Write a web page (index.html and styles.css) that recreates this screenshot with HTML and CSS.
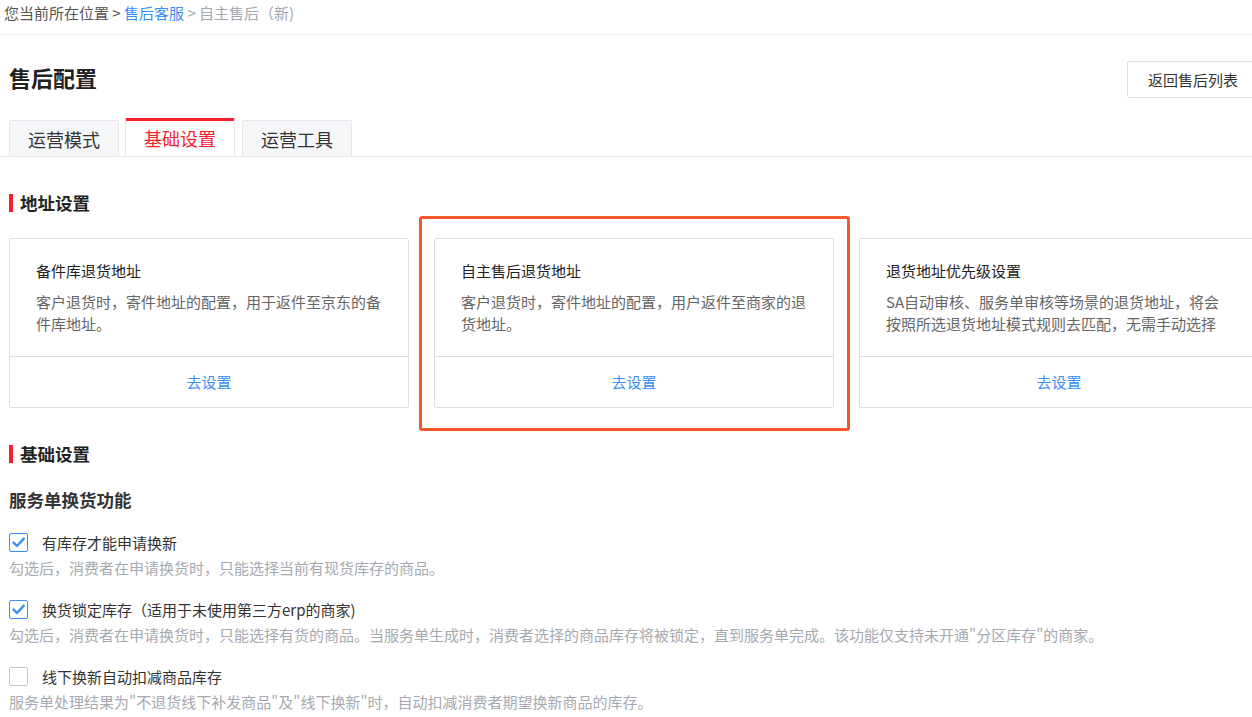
FILE: index.html
```html
<!DOCTYPE html>
<html lang="zh">
<head>
<meta charset="utf-8">
<link rel="stylesheet" href="styles.css">
</head>
<body>
<div class="breadcrumb">
  <span class="bc-base">您当前所在位置 &gt; </span><a class="bc-link">售后客服</a><span class="bc-cur"> &gt; 自主售后（新)</span>
</div>
<div class="page">
  <div class="head">
    <h1 class="title">售后配置</h1>
    <button class="back-btn">返回售后列表</button>
  </div>
  <div class="tabs">
    <div class="tab">运营模式</div>
    <div class="tab active">基础设置</div>
    <div class="tab">运营工具</div>
  </div>

  <h2 class="sec-title">地址设置</h2>
  <div class="cards">
    <div class="card">
      <div class="card-body">
        <div class="card-title">备件库退货地址</div>
        <div class="card-desc">客户退货时，寄件地址的配置，用于返件至京东的备件库地址。</div>
      </div>
      <div class="card-foot">去设置</div>
    </div>
    <div class="card highlighted">
      <div class="card-body">
        <div class="card-title">自主售后退货地址</div>
        <div class="card-desc">客户退货时，寄件地址的配置，用户返件至商家的退货地址。</div>
      </div>
      <div class="card-foot">去设置</div>
      <div class="mark"></div>
    </div>
    <div class="card">
      <div class="card-body">
        <div class="card-title">退货地址优先级设置</div>
        <div class="card-desc">SA自动审核、服务单审核等场景的退货地址，将会按照所选退货地址模式规则去匹配，无需手动选择</div>
      </div>
      <div class="card-foot">去设置</div>
    </div>
  </div>

  <h2 class="sec-title sec-basic">基础设置</h2>
  <h3 class="sub-title">服务单换货功能</h3>

  <div class="opt">
    <label class="opt-row"><span class="cb checked"><svg viewBox="0 0 19 19" width="19" height="19"><path d="M4.5 9.6 L8 13 L14.8 5.6" fill="none" stroke="#3a8ef6" stroke-width="2.4" stroke-linecap="round" stroke-linejoin="round"/></svg></span><span class="opt-label">有库存才能申请换新</span></label>
    <div class="opt-desc">勾选后，消费者在申请换货时，只能选择当前有现货库存的商品。</div>
  </div>
  <div class="opt">
    <label class="opt-row"><span class="cb checked"><svg viewBox="0 0 19 19" width="19" height="19"><path d="M4.5 9.6 L8 13 L14.8 5.6" fill="none" stroke="#3a8ef6" stroke-width="2.4" stroke-linecap="round" stroke-linejoin="round"/></svg></span><span class="opt-label">换货锁定库存（适用于未使用第三方erp的商家)</span></label>
    <div class="opt-desc">勾选后，消费者在申请换货时，只能选择有货的商品。当服务单生成时，消费者选择的商品库存将被锁定，直到服务单完成。该功能仅支持未开通"分区库存"的商家。</div>
  </div>
  <div class="opt">
    <label class="opt-row"><span class="cb"></span><span class="opt-label">线下换新自动扣减商品库存</span></label>
    <div class="opt-desc">服务单处理结果为"不退货线下补发商品"及"线下换新"时，自动扣减消费者期望换新商品的库存。</div>
  </div>
</div>
</body>
</html>
```

FILE: styles.css
```css
html, body {
  margin: 0;
  padding: 0;
  overflow: hidden;
  background: #fff;
}
body {
  font-family: "Microsoft YaHei", "Noto Sans CJK SC", "Liberation Sans", sans-serif;
  color: #333;
  font-size: 15px;
  width: 1270px;
}
.breadcrumb {
  height: 35px;
  line-height: 26px;
  padding-left: 4px;
  font-size: 15px;
  border-bottom: 1px solid #eeeff1;
  box-sizing: border-box;
  width: 1252px;
}
.bc-base { color: #555; }
.bc-link { color: #3a8ef6; }
.bc-cur { color: #a4a7ad; }

.page {
  padding-left: 9px;
  width: 1252px;
  box-sizing: border-box;
}
.head {
  display: flex;
  justify-content: space-between;
  align-items: center;
  height: 85px;
}
.title {
  margin: 0;
  font-size: 22px;
  font-weight: bold;
  color: #222;
  margin-top: -1px;
}
.back-btn {
  font-family: inherit;
  font-size: 15px;
  color: #333;
  background: #fff;
  border: 1px solid #dcdfe6;
  border-radius: 2px;
  height: 37px;
  width: 134px;
  margin-right: -9px;
  margin-top: 3px;
  text-align: left;
  padding: 0 0 0 20px;
}
.tabs {
  display: flex;
  gap: 6px;
  border-bottom: 1px solid #e4e6ea;
  height: 37px;
  margin-left: -9px;
  padding-left: 9px;
  box-sizing: border-box;
}
.tab {
  width: 110px;
  height: 36px;
  box-sizing: border-box;
  background: #f5f6f8;
  border: 1px solid #e4e6ea;
  border-bottom: none;
  border-radius: 2px 2px 0 0;
  font-size: 18px;
  color: #333;
  text-align: center;
  line-height: 36px;
}
.tab:last-child { margin-left: 1px; }
.tab.active {
  background: #fff;
  color: #f5222d;
  border-top: 3px solid #f5222d;
  height: 38px;
  margin-top: -2px;
  line-height: 34px;
}
.sec-title {
  margin: 0;
  font-size: 17.5px;
  font-weight: bold;
  color: #222;
  padding-left: 11px;
  position: relative;
  line-height: 20px;
  margin-top: 36px;
}
.sec-title::before {
  content: "";
  position: absolute;
  left: 0;
  top: 1px;
  width: 4px;
  height: 18px;
  background: #f5222d;
}
.cards {
  display: flex;
  gap: 25px;
  margin-top: 25px;
}
.card {
  flex: 0 0 400px;
  height: 170px;
  box-sizing: border-box;
  border: 1px solid #dcdfe6;
  border-radius: 2px;
  display: flex;
  flex-direction: column;
  position: relative;
}
.card-body {
  height: 118px;
  box-sizing: border-box;
  padding: 22px 26px 0 26px;
  border-bottom: 1px solid #dcdfe6;
}
.card-title {
  font-size: 15px;
  color: #222;
  line-height: 20px;
}
.card-desc {
  margin-top: 10px;
  font-size: 15px;
  color: #666;
  line-height: 22px;
}
.card-foot {
  flex: 1;
  display: flex;
  align-items: center;
  justify-content: center;
  color: #3a8ef6;
  font-size: 15px;
  padding-bottom: 1px;
}
.mark {
  position: absolute;
  left: -16px;
  top: -23px;
  width: 431px;
  height: 215px;
  border: 3px solid #f4572a;
  border-radius: 3px;
  box-sizing: border-box;
  pointer-events: none;
}
.sec-basic {
  margin-top: 36px;
}
.sub-title {
  margin: 0;
  font-size: 17.5px;
  font-weight: bold;
  color: #333;
  margin-top: 25px;
  line-height: 22px;
}
.opt-row {
  display: flex;
  align-items: center;
  height: 20px;
}
.cb {
  width: 19px;
  height: 19px;
  box-sizing: border-box;
  border: 1px solid #c3c7cf;
  border-radius: 2px;
  background: #fff;
  position: relative;
  flex: 0 0 19px;
}
.cb.checked {
  border-color: #3a8ef6;
}
.cb svg {
  position: absolute;
  left: -1px;
  top: -1px;
}
.opt-label {
  margin-left: 14px;
  font-size: 15px;
  color: #333;
}
.opt-desc {
  font-size: 15px;
  color: #a6a9b0;
  line-height: 20px;
  margin-top: 6px;
  margin-bottom: 21px;
}
.sub-title + .opt {
  margin-top: 21px;
}
```
